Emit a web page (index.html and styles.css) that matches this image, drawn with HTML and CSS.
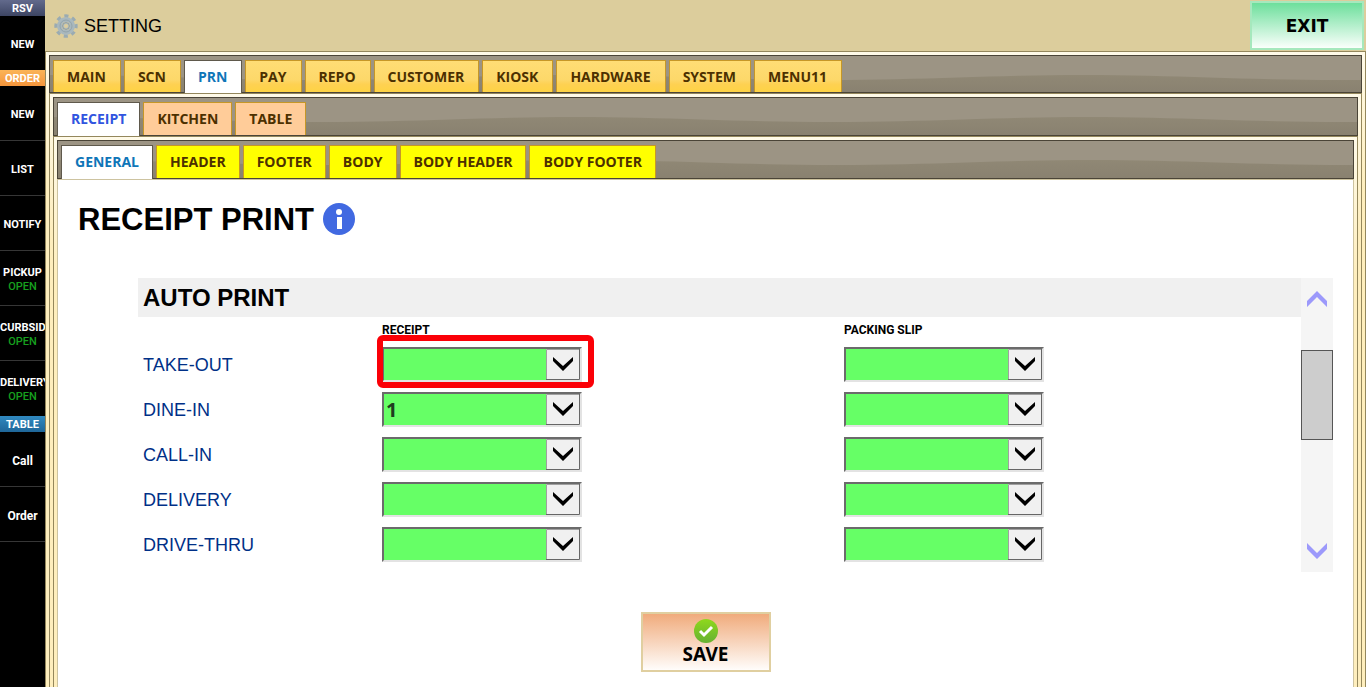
FILE: index.html
```
<!DOCTYPE html>
<html lang="en">
<head>
  <meta charset="UTF-8">
  <meta name="viewport" content="width=device-width, initial-scale=1.0">
  <title>Setting - Receipt Print</title>
  <link rel="stylesheet" href="styles.css">
</head>
<body>
  <div class="app">
    <nav class="sidebar">
      <h2 class="group group-rsv">RSV</h2>
      <a class="item flush" href="#">NEW</a>
      <h2 class="group group-order">ORDER</h2>
      <a class="item" href="#">NEW</a>
      <a class="item" href="#">LIST</a>
      <a class="item" href="#">NOTIFY</a>
      <a class="item" href="#">PICKUP <span class="open">OPEN</span></a>
      <a class="item" href="#">CURBSIDE <span class="open">OPEN</span></a>
      <a class="item last" href="#">DELIVERY <span class="open">OPEN</span></a>
      <h2 class="group group-table">TABLE</h2>
      <a class="item mixed" href="#">Call</a>
      <a class="item mixed" href="#">Order</a>
    </nav>

    <div class="main">
      <header class="topbar">
        <svg class="gear" viewBox="0 0 24 24" width="24" height="24" aria-hidden="true">
          <circle cx="12" cy="12" r="10" fill="none" stroke="#9aabb2" stroke-width="3.4" stroke-dasharray="4 3.854" transform="rotate(-11 12 12)"/>
          <circle cx="12" cy="12" r="6.5" fill="none" stroke="#a9b8be" stroke-width="5"/>
          <circle cx="12" cy="12" r="6" fill="none" stroke="#93a4ab" stroke-width="1"/>
          <circle cx="12" cy="12" r="3.4" fill="#b9c2bd" stroke="#8c9ca2" stroke-width="1"/>
          <circle cx="12" cy="12" r="2" fill="#dccd9e"/>
        </svg>
        <span class="topbar-title">SETTING</span>
        <button class="exit-btn" type="button">EXIT</button>
      </header>

      <div class="tabs">
        <div class="tab-bar tab-bar-main">
          <button class="tab" type="button">MAIN</button>
          <button class="tab" type="button">SCN</button>
          <button class="tab active" type="button">PRN</button>
          <button class="tab" type="button">PAY</button>
          <button class="tab" type="button">REPO</button>
          <button class="tab" type="button">CUSTOMER</button>
          <button class="tab" type="button">KIOSK</button>
          <button class="tab" type="button">HARDWARE</button>
          <button class="tab" type="button">SYSTEM</button>
          <button class="tab" type="button">MENU11</button>
        </div>

        <div class="tabs">
          <div class="tab-bar tab-bar-print">
            <button class="tab active" type="button">RECEIPT</button>
            <button class="tab" type="button">KITCHEN</button>
            <button class="tab" type="button">TABLE</button>
          </div>

          <div class="tabs">
            <div class="tab-bar tab-bar-receipt">
              <button class="tab active" type="button">GENERAL</button>
              <button class="tab" type="button">HEADER</button>
              <button class="tab" type="button">FOOTER</button>
              <button class="tab" type="button">BODY</button>
              <button class="tab" type="button">BODY HEADER</button>
              <button class="tab" type="button">BODY FOOTER</button>
            </div>

            <main class="panel">
              <h1 class="title">
                <span>RECEIPT PRINT</span>
                <svg viewBox="0 0 32 32" width="32" height="32" aria-hidden="true">
                  <circle cx="16" cy="16" r="16" fill="#4169e1"/>
                  <circle cx="16" cy="9" r="3" fill="#fff"/>
                  <path d="M14 14h5v12h-5z" fill="#fff"/>
                </svg>
              </h1>

              <form>
                <div class="list">
                  <div class="list-body">
                    <h2 class="section-title">AUTO PRINT</h2>
                    <div class="grid">
                      <span class="col-title receipt-title">RECEIPT</span>
                      <span class="col-title">PACKING SLIP</span>

                      <label for="takeout">TAKE-OUT</label>
                      <div class="cell highlight">
                        <select id="takeout"><option></option><option>1</option><option>2</option></select>
                      </div>
                      <div class="cell">
                        <select aria-label="TAKE-OUT packing slip"><option></option><option>1</option><option>2</option></select>
                      </div>

                      <label for="dinein">DINE-IN</label>
                      <div class="cell">
                        <select id="dinein"><option></option><option selected>1</option><option>2</option></select>
                      </div>
                      <div class="cell">
                        <select aria-label="DINE-IN packing slip"><option></option><option>1</option><option>2</option></select>
                      </div>

                      <label for="callin">CALL-IN</label>
                      <div class="cell">
                        <select id="callin"><option></option><option>1</option><option>2</option></select>
                      </div>
                      <div class="cell">
                        <select aria-label="CALL-IN packing slip"><option></option><option>1</option><option>2</option></select>
                      </div>

                      <label for="delivery">DELIVERY</label>
                      <div class="cell">
                        <select id="delivery"><option></option><option>1</option><option>2</option></select>
                      </div>
                      <div class="cell">
                        <select aria-label="DELIVERY packing slip"><option></option><option>1</option><option>2</option></select>
                      </div>

                      <label for="drivethru">DRIVE-THRU</label>
                      <div class="cell">
                        <select id="drivethru"><option></option><option>1</option><option>2</option></select>
                      </div>
                      <div class="cell">
                        <select aria-label="DRIVE-THRU packing slip"><option></option><option>1</option><option>2</option></select>
                      </div>
                    </div>
                  </div>

                  <div class="scrollbar">
                    <button class="scroll-btn" type="button" aria-label="Scroll up">
                      <svg viewBox="0 0 20 16" width="20" height="16"><path d="M0 10 10 0 20 10v6L10 6 0 16z" fill="#9c99fb"/></svg>
                    </button>
                    <div class="thumb"></div>
                    <button class="scroll-btn down" type="button" aria-label="Scroll down">
                      <svg viewBox="0 0 20 16" width="20" height="16"><path d="M0 0 10 10 20 0v6L10 16 0 6z" fill="#9c99fb"/></svg>
                    </button>
                  </div>
                </div>

                <button class="save-btn" type="submit">
                  <svg viewBox="0 0 24 24" width="24" height="24" aria-hidden="true">
                    <defs>
                      <linearGradient id="ok" x1="0" y1="0" x2="0" y2="1">
                        <stop offset="0" stop-color="#8fd81c"/>
                        <stop offset="1" stop-color="#66b132"/>
                      </linearGradient>
                    </defs>
                    <circle cx="12" cy="12" r="12" fill="url(#ok)"/>
                    <path d="M6 12l4 4 8-8" fill="none" stroke="#fff" stroke-width="3"/>
                  </svg>
                  SAVE
                </button>
              </form>
            </main>
          </div>
        </div>
      </div>
    </div>
  </div>
</body>
</html>
```
FILE: styles.css
```
*, *::after {
  box-sizing: border-box;
}

html, body {
  height: 100%;
  margin: 0;
  overflow: hidden;
  font-family: "Liberation Sans", Arial, sans-serif;
}

h1, h2 {
  margin: 0;
}

button {
  margin: 0;
  cursor: pointer;
}

.app {
  display: flex;
  height: 100%;
}

/* Left menu */
.sidebar {
  flex: none;
  width: 45px;
  background: #000;
  overflow: hidden;
  font-family: Roboto, sans-serif;
}

.group {
  height: 16px;
  line-height: 17px;
  font-size: 11px;
  text-align: center;
  color: #fff;
}

.group-rsv {
  background: linear-gradient(#626a8c, #3d4563);
}

.group-order {
  background: linear-gradient(#fbb457, #f4953c);
}

.group-table {
  background: linear-gradient(#3089c0, #1f6699);
}

.item {
  display: flex;
  flex-direction: column;
  justify-content: center;
  align-items: safe center;
  height: 55px;
  padding-top: 3px;
  border-bottom: 1px solid #363636;
  font-size: 11px;
  font-weight: bold;
  line-height: 14px;
  color: #fff;
  text-decoration: none;
}

.item.flush {
  height: 54px;
  border-bottom: none;
}

.item.last {
  border-bottom-color: #000;
}

.item.mixed {
  font-size: 12px;
}

.open {
  font-weight: 500;
  color: #17a01f;
}

/* Top bar */
.main {
  flex: 1;
  min-width: 0;
  display: flex;
  flex-direction: column;
}

.topbar {
  flex: none;
  display: flex;
  align-items: center;
  height: 51px;
  padding: 0 2px 0 9px;
  background: #dccd9c;
}

.topbar-title {
  margin-left: 6px;
  padding-top: 2px;
  font-size: 18px;
  color: #000;
}

.exit-btn {
  width: 114px;
  height: 49px;
  margin-left: auto;
  border: 2px solid #a6e8bd;
  background: linear-gradient(#6ddf9c, #fafffb);
  font-family: "DejaVu Sans", Verdana, sans-serif;
  font-size: 17px;
  font-weight: bold;
  color: #000;
}

/* Nested tabs */
.tabs {
  flex: 1;
  display: flex;
  flex-direction: column;
  padding: 3px 3px 0;
  border: 1px solid #94875c;
  border-bottom: none;
  background: linear-gradient(#fffae8, #feeebd 140px);
}

.tab-bar {
  flex: none;
  display: flex;
  gap: 3px;
  height: 39px;
  padding: 4px 3px 0;
  border: 1px solid #4a4437;
  background: #9c9483 url("data:image/svg+xml,%3Csvg xmlns='http://www.w3.org/2000/svg' width='512' height='37'%3E%3ClinearGradient id='b' x2='0' y2='1'%3E%3Cstop stop-color='%23908875'/%3E%3Cstop offset='1' stop-color='%23898170'/%3E%3C/linearGradient%3E%3Cpath fill='%239c9484' d='M0 0h512v37H0z'/%3E%3Cpath fill='url(%23b)' d='M0 19C90 19 160 24 256 24S420 19 512 19V37H0z'/%3E%3C/svg%3E") 10px 0 repeat-x;
}

.tab-bar-main {
  height: 38px;
}

.tab {
  padding: 0 13px 2px;
  border: 1px solid #c69727;
  border-bottom: none;
  background: linear-gradient(#ffdd75, #fdd86a 60%, #fed152 75%, #fed344);
  font-family: "Open Sans", sans-serif;
  font-size: 14px;
  font-weight: bold;
  white-space: nowrap;
  color: #4c3000;
}

.tab-bar-main .tab {
  padding: 0 14px 0 13px;
}

.tab-bar-print .tab {
  background: #ffcc99;
}

.tab-bar-receipt .tab {
  background: #ffff00;
}

.tab-bar .tab.active {
  margin-bottom: -1px;
  padding-bottom: 3px;
  border-color: #5f594c;
  background: #fff;
  color: #0f76b8;
}

.tab-bar-main .tab.active {
  padding-bottom: 1px;
}

.tab-bar-print .tab.active {
  color: #3155e0;
}

/* Receipt settings */
.panel {
  flex: 1;
  padding: 20px 20px 0;
  border: 1px solid #cdc3a0;
  border-bottom: none;
  background: #fff;
}

.title {
  display: flex;
  align-items: center;
  gap: 9px;
  height: 38px;
  font-size: 31px;
}

.title span {
  padding-top: 2px;
}

.list {
  display: flex;
  margin: 40px 0 0 60px;
}

.list-body {
  flex: 1;
}

.section-title {
  height: 39px;
  padding-left: 5px;
  font-size: 24px;
  line-height: 40px;
  background: #f0f0f0;
}

.grid {
  display: grid;
  grid-template-columns: 239px 1fr 1fr;
  grid-template-rows: 30px;
  grid-auto-rows: 45px;
  column-gap: 5px;
}

.col-title {
  font-family: Roboto, sans-serif;
  font-size: 12px;
  font-weight: bold;
  line-height: 26px;
}

.receipt-title {
  grid-column: 2;
}

.grid label {
  padding-left: 5px;
  font-size: 18px;
  line-height: 36px;
  color: #003087;
}

.cell {
  position: relative;
}

.highlight::after {
  content: "";
  position: absolute;
  top: -12px;
  left: -5px;
  width: 217px;
  height: 53px;
  border: 6px solid #fb0007;
  border-radius: 6px;
  pointer-events: none;
}

select {
  display: block;
  width: 200px;
  height: 35px;
  padding: 0 36px 0 2px;
  border: 2px solid;
  border-color: #6b6b6b #e3e3e3 #e3e3e3 #6b6b6b;
  border-radius: 0;
  appearance: none;
  background: #66ff66 url("data:image/svg+xml,%3Csvg xmlns='http://www.w3.org/2000/svg' width='34' height='31'%3E%3Cpath fill='%23f0f0f0' d='M0 0h34v31H0z'/%3E%3Cpath fill='none' stroke='%23a0a0a0' d='M.5 31V.5H34'/%3E%3Cpath fill='none' stroke='%23666' d='M33.5 0v30.5H0'/%3E%3Cpath d='M7 8l10 9 10-9v4L17 22 7 12z'/%3E%3C/svg%3E") right top no-repeat;
  font-family: "Noto Sans", sans-serif;
  font-size: 20px;
  font-weight: bold;
  color: #1f3d1f;
}

.scrollbar {
  display: flex;
  flex-direction: column;
  width: 32px;
  background: #f5f5f5;
}

.scroll-btn {
  display: flex;
  justify-content: center;
  align-items: center;
  height: 42px;
  padding: 0;
  border: none;
  background: none;
}

.scroll-btn.down {
  margin-top: auto;
}

.thumb {
  height: 90px;
  margin-top: 30px;
  border: 1px solid #555;
  background: #cdcdcd;
}

.save-btn {
  display: flex;
  flex-direction: column;
  align-items: center;
  width: 130px;
  height: 60px;
  margin: 40px auto 0;
  padding: 5px 0 0;
  border: 2px solid #e0cfa0;
  background: linear-gradient(#f0ab7c, #fffdfb);
  font-family: "Noto Sans", sans-serif;
  font-size: 19px;
  font-weight: bold;
  line-height: 22px;
  color: #000;
}
```
